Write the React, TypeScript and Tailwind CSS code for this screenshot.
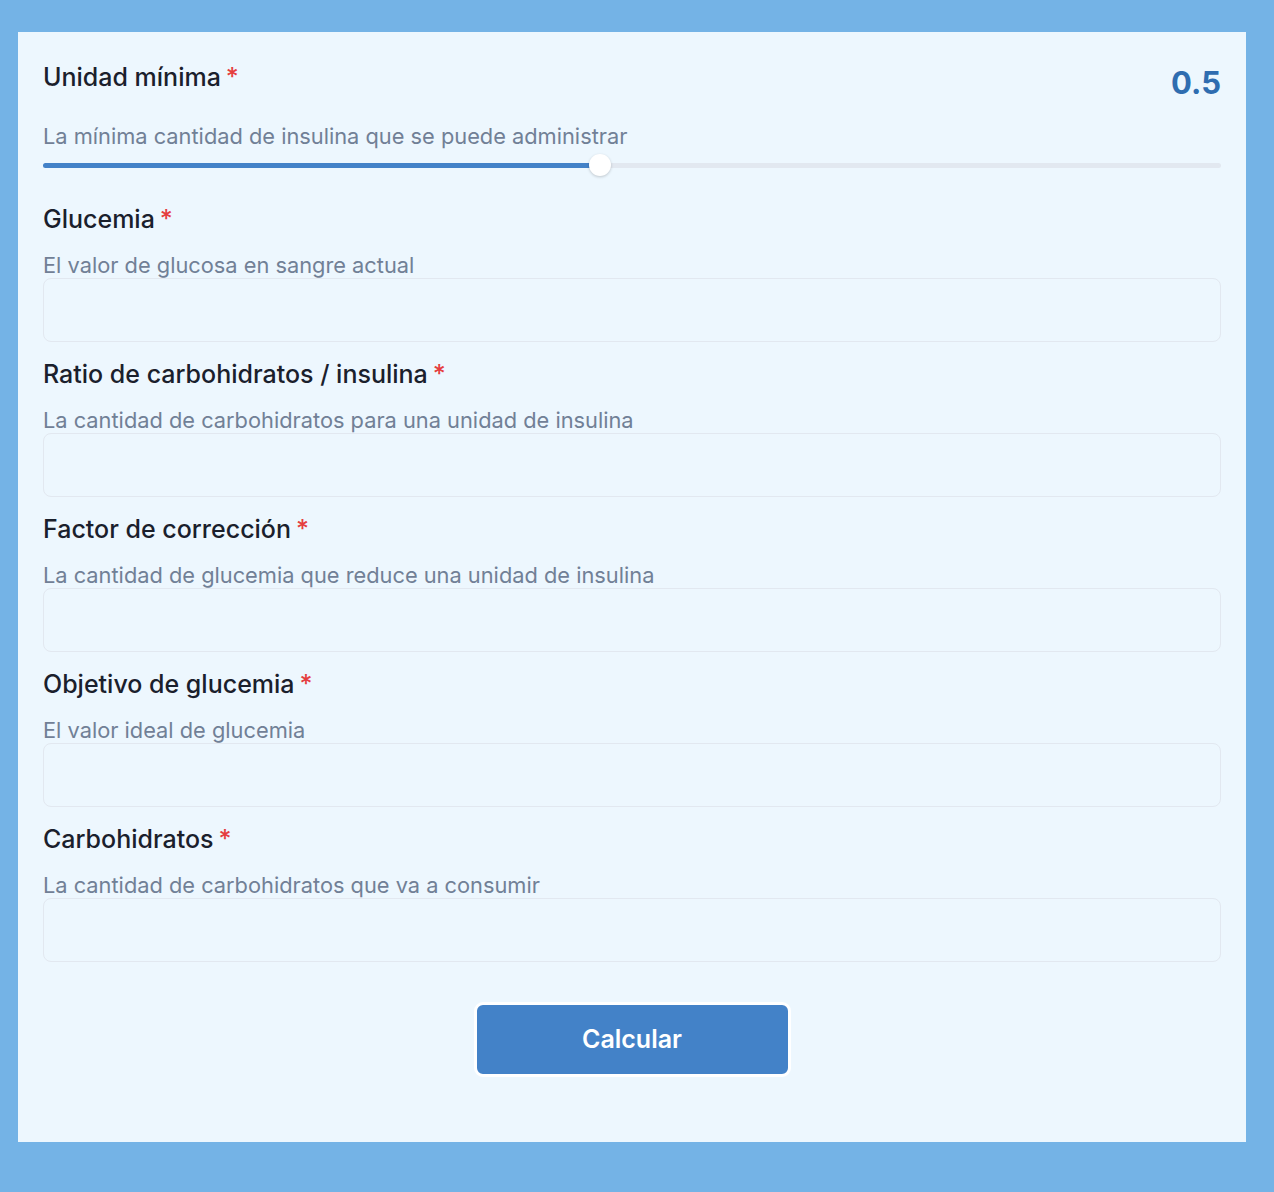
import React from "react";

const fields = [
  { label: "Glucemia", desc: "El valor de glucosa en sangre actual" },
  { label: "Ratio de carbohidratos / insulina", desc: "La cantidad de carbohidratos para una unidad de insulina" },
  { label: "Factor de corrección", desc: "La cantidad de glucemia que reduce una unidad de insulina" },
  { label: "Objetivo de glucemia", desc: "El valor ideal de glucemia" },
  { label: "Carbohidratos", desc: "La cantidad de carbohidratos que va a consumir" },
];

function Label({ text }: { text: string }) {
  return (
    <div className="text-[25px] leading-[36px] font-medium text-[#1a202c]">
      {text}
      <span className="ml-[5px] text-[#e53e3e]">*</span>
    </div>
  );
}

export default function App() {
  return (
    <div
      className="min-h-[1192px] w-full bg-[#74b3e6] pt-[32px] pb-[50px] px-[18px]"
      style={{ fontFamily: "Inter, 'Noto Sans', sans-serif" }}
    >
      <div className="w-[1228px] bg-[#edf7fe] px-[25px] pt-[27px] pb-[66px] h-[1110px]">
        <div className="flex items-start justify-between">
          <Label text="Unidad mínima" />
          <div className="text-[31px] leading-[48px] font-bold text-[#2f6db0]">0.5</div>
        </div>
        <div className="mt-[16px] text-[21.8px] leading-[26px] text-[#718096]">
          La mínima cantidad de insulina que se puede administrar
        </div>
        <div className="relative h-[22px] mt-[5px] flex items-center">
          <div className="w-full h-[5px] rounded-full bg-[#e2e8f0]">
            <div className="h-full rounded-full bg-[#4382c8]" style={{ width: "47.3%" }} />
          </div>
          <div
            className="absolute top-0 w-[22px] h-[22px] rounded-full bg-white shadow-[0_1px_3px_rgba(0,0,0,0.2)]"
            style={{ left: "calc(47.3% - 11px)" }}
          />
        </div>
        {fields.map((f, i) => (
          <div key={i} className={i === 0 ? "mt-[25px]" : "mt-[14px]"}>
            <Label text={f.label} />
            <div className="mt-[15px] text-[21.8px] leading-[26px] text-[#718096]">{f.desc}</div>
            <input className="block w-full h-[64px] rounded-[8px] border border-[#e2e8f0] bg-transparent outline-none" />
          </div>
        ))}
        <div className="flex justify-center mt-[40px]">
          <button className="w-[317px] h-[75px] rounded-[9px] border-[3px] border-white bg-[#4382c8] text-white text-[25px] font-semibold">
            Calcular
          </button>
        </div>
      </div>
    </div>
  );
}
